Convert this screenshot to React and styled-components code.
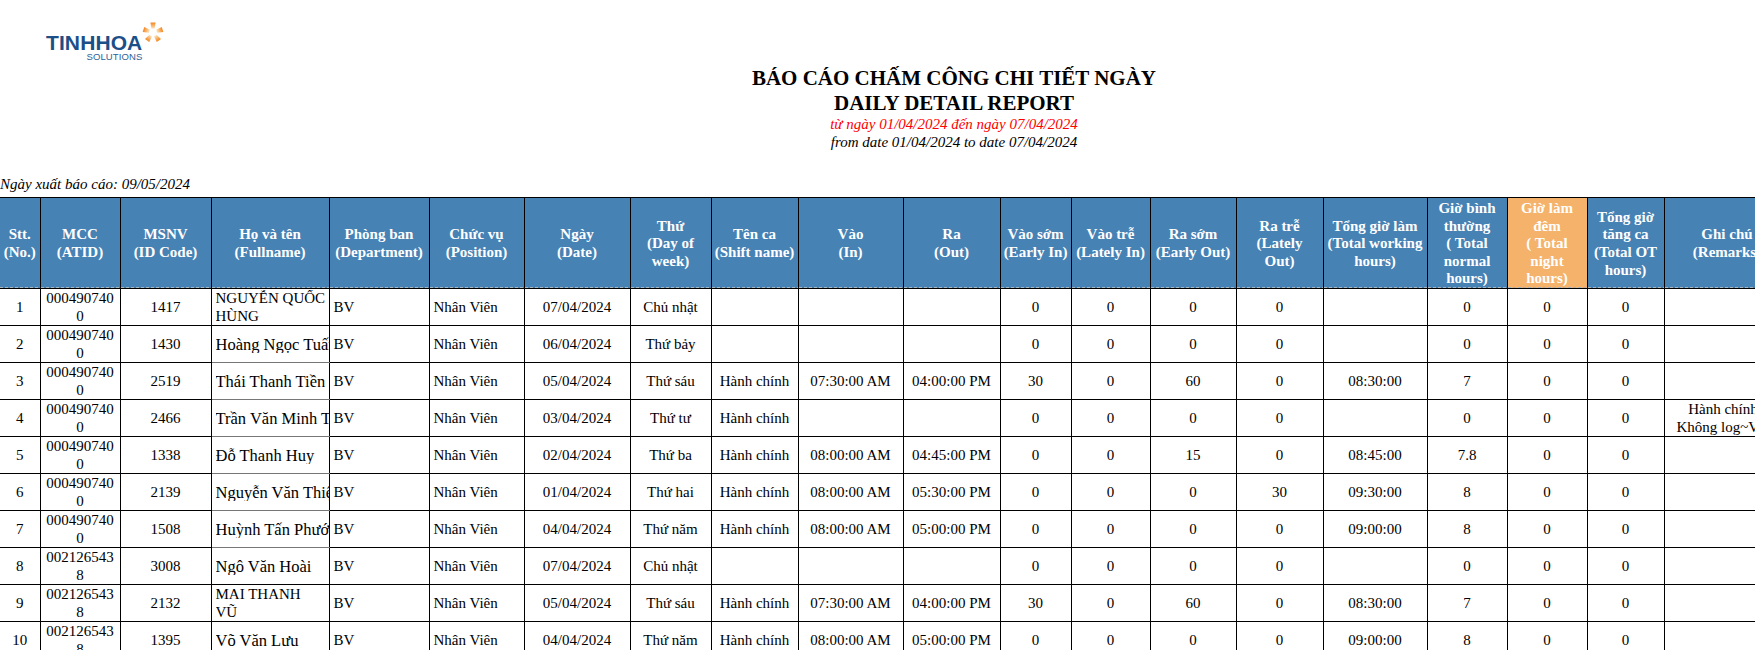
import React from 'react';
import styled, { createGlobalStyle } from 'styled-components';

const GlobalStyle = createGlobalStyle`
  html, body {
    margin: 0;
    height: 650px;
    overflow: hidden;
    background: #fff;
  }
`;

const columnWidths = [40, 80, 91, 118, 100, 95, 106, 81, 87, 105, 97, 71, 79, 86, 87, 104, 80, 80, 77, 126];

const headers = [
  ['Stt.', '(No.)'],
  ['MCC', '(ATID)'],
  ['MSNV', '(ID Code)'],
  ['Họ và tên', '(Fullname)'],
  ['Phòng ban', '(Department)'],
  ['Chức vụ', '(Position)'],
  ['Ngày', '(Date)'],
  ['Thứ', '(Day of week)'],
  ['Tên ca', '(Shift name)'],
  ['Vào', '(In)'],
  ['Ra', '(Out)'],
  ['Vào sớm', '(Early In)'],
  ['Vào trễ', '(Lately In)'],
  ['Ra sớm', '(Early Out)'],
  ['Ra trễ', '(Lately', 'Out)'],
  ['Tổng giờ làm', '(Total working hours)'],
  ['Giờ bình thường', '( Total normal hours)'],
  ['Giờ làm đêm', '( Total night hours)'],
  ['Tổng giờ tăng ca', '(Total OT hours)'],
  ['Ghi chú', '(Remarks)'],
];

const ID_A = '0004907400';
const ID_B = '0021265438';
const REMARK = 'Hành chính~ Không log~Vào;';

const rows = [
  { mcc: ID_A, code: '1417', name: 'NGUYỄN QUỐC HÙNG', date: '07/04/2024', day: 'Chủ nhật', shift: '', timeIn: '', timeOut: '', early: 0, late: 0, out: 0, lateOut: 0, total: '', normal: 0 },
  { mcc: ID_A, code: '1430', name: 'Hoàng Ngọc Tuấn', fixedName: true, softLine: true, date: '06/04/2024', day: 'Thứ bảy', shift: '', timeIn: '', timeOut: '', early: 0, late: 0, out: 0, lateOut: 0, total: '', normal: 0 },
  { mcc: ID_A, code: '2519', name: 'Thái Thanh Tiền', fixedName: true, softLine: true, date: '05/04/2024', day: 'Thứ sáu', shift: 'Hành chính', timeIn: '07:30:00 AM', timeOut: '04:00:00 PM', early: 30, late: 0, out: 60, lateOut: 0, total: '08:30:00', normal: 7 },
  { mcc: ID_A, code: '2466', name: 'Trần Văn Minh Tâm', fixedName: true, softLine: true, date: '03/04/2024', day: 'Thứ tư', shift: 'Hành chính', timeIn: '', timeOut: '', early: 0, late: 0, out: 0, lateOut: 0, total: '', normal: 0, remark: REMARK },
  { mcc: ID_A, code: '1338', name: 'Đỗ Thanh Huy', fixedName: true, softLine: true, date: '02/04/2024', day: 'Thứ ba', shift: 'Hành chính', timeIn: '08:00:00 AM', timeOut: '04:45:00 PM', early: 0, late: 0, out: 15, lateOut: 0, total: '08:45:00', normal: 7.8 },
  { mcc: ID_A, code: '2139', name: 'Nguyễn Văn Thiệu', fixedName: true, softLine: true, date: '01/04/2024', day: 'Thứ hai', shift: 'Hành chính', timeIn: '08:00:00 AM', timeOut: '05:30:00 PM', early: 0, late: 0, out: 0, lateOut: 30, total: '09:30:00', normal: 8 },
  { mcc: ID_A, code: '1508', name: 'Huỳnh Tấn Phước', fixedName: true, softLine: true, date: '04/04/2024', day: 'Thứ năm', shift: 'Hành chính', timeIn: '08:00:00 AM', timeOut: '05:00:00 PM', early: 0, late: 0, out: 0, lateOut: 0, total: '09:00:00', normal: 8 },
  { mcc: ID_B, code: '3008', name: 'Ngô Văn Hoài', fixedName: true, date: '07/04/2024', day: 'Chủ nhật', shift: '', timeIn: '', timeOut: '', early: 0, late: 0, out: 0, lateOut: 0, total: '', normal: 0 },
  { mcc: ID_B, code: '2132', name: 'MAI THANH VŨ', date: '05/04/2024', day: 'Thứ sáu', shift: 'Hành chính', timeIn: '07:30:00 AM', timeOut: '04:00:00 PM', early: 30, late: 0, out: 60, lateOut: 0, total: '08:30:00', normal: 7 },
  { mcc: ID_B, code: '1395', name: 'Võ Văn Lưu', fixedName: true, date: '04/04/2024', day: 'Thứ năm', shift: 'Hành chính', timeIn: '08:00:00 AM', timeOut: '05:00:00 PM', early: 0, late: 0, out: 0, lateOut: 0, total: '09:00:00', normal: 8 },
];

const petals = [0, 72, 144, 216, 288];

const LogoStar = () => (
  <StyledStar viewBox="0 0 22 22" aria-hidden="true">
    <defs>
      <linearGradient id="petal" x1="0" y1="0" x2="0" y2="1">
        <stop offset="0" stopColor="#f4851c" />
        <stop offset="1" stopColor="#fde3bd" />
      </linearGradient>
    </defs>
    {petals.map((angle) => (
      <polygon key={angle} points="8.4,0.5 13.6,0.5 12.6,6.6 9.4,6.6" fill="url(#petal)" transform={`rotate(${angle} 11 10.5)`} />
    ))}
  </StyledStar>
);

export default function App() {
  return (
    <StyledPage>
      <GlobalStyle />
      <StyledLogo>
        <StyledWordmark>
          <StyledBrand>TINHHOA</StyledBrand>
          <StyledBrandSub>SOLUTIONS</StyledBrandSub>
        </StyledWordmark>
        <LogoStar />
      </StyledLogo>

      <StyledHeading>
        <StyledTitle>BÁO CÁO CHẤM CÔNG CHI TIẾT NGÀY</StyledTitle>
        <StyledTitle>DAILY DETAIL REPORT</StyledTitle>
        <StyledRange $red>từ ngày 01/04/2024 đến ngày 07/04/2024</StyledRange>
        <StyledRange>from date 01/04/2024 to date 07/04/2024</StyledRange>
      </StyledHeading>

      <StyledExportDate>Ngày xuất báo cáo: 09/05/2024</StyledExportDate>

      <StyledTable>
        <colgroup>
          {columnWidths.map((width, i) => (
            <col key={i} style={{ width }} />
          ))}
        </colgroup>
        <thead>
          <tr>
            {headers.map((lines, i) => (
              <StyledHeadCell key={i} $night={i === 17}>
                {lines.map((line, j) => (
                  <React.Fragment key={j}>
                    {j > 0 && <br />}
                    {line}
                  </React.Fragment>
                ))}
              </StyledHeadCell>
            ))}
          </tr>
        </thead>
        <tbody>
          {rows.map((row, i) => (
            <tr key={i}>
              <StyledCell>{i + 1}</StyledCell>
              <StyledCell>{row.mcc}</StyledCell>
              <StyledCell>{row.code}</StyledCell>
              <StyledNameCell $fixed={row.fixedName} $soft={row.softLine}>
                <StyledNameClip $fixed={row.fixedName}>{row.name}</StyledNameClip>
              </StyledNameCell>
              <StyledCell $left>BV</StyledCell>
              <StyledCell $left>Nhân Viên</StyledCell>
              <StyledCell>{row.date}</StyledCell>
              <StyledCell>{row.day}</StyledCell>
              <StyledCell>{row.shift}</StyledCell>
              <StyledCell>{row.timeIn}</StyledCell>
              <StyledCell>{row.timeOut}</StyledCell>
              <StyledCell>{row.early}</StyledCell>
              <StyledCell>{row.late}</StyledCell>
              <StyledCell>{row.out}</StyledCell>
              <StyledCell>{row.lateOut}</StyledCell>
              <StyledCell>{row.total}</StyledCell>
              <StyledCell>{row.normal}</StyledCell>
              <StyledCell>0</StyledCell>
              <StyledCell>0</StyledCell>
              <StyledCell>{row.remark}</StyledCell>
            </tr>
          ))}
        </tbody>
      </StyledTable>
    </StyledPage>
  );
}

const StyledPage = styled.div`
  width: 1908px;
  font-family: 'Liberation Serif', 'Times New Roman', serif;
  color: #000;
`;

const StyledLogo = styled.div`
  display: flex;
  align-items: flex-start;
  padding: 23px 0 0 46px;
  height: 36px;
`;

const StyledWordmark = styled.div`
  display: flex;
  flex-direction: column;
  align-items: flex-end;
  margin-top: 10px;
  font-family: 'Liberation Sans', Arial, sans-serif;
`;

const StyledBrand = styled.div`
  font-size: 21px;
  line-height: 19px;
  font-weight: 700;
  letter-spacing: 0.1px;
  color: #1c4f87;
`;

const StyledBrandSub = styled.div`
  font-size: 9.5px;
  line-height: 9px;
  letter-spacing: 0.1px;
  color: #2e6299;
`;

const StyledStar = styled.svg`
  width: 22px;
  height: 22px;
  margin-top: -1px;
  flex: none;
`;

const StyledHeading = styled.div`
  margin-top: 7px;
  text-align: center;
`;

const StyledTitle = styled.div`
  font-size: 21px;
  line-height: 25px;
  font-weight: 700;
`;

const StyledRange = styled.div`
  font-size: 15px;
  line-height: 17.5px;
  font-style: italic;
  color: ${({ $red }) => ($red ? '#ff0000' : '#000')};
`;

const StyledExportDate = styled.div`
  margin-top: 25px;
  font-size: 15px;
  line-height: 17px;
  font-style: italic;
`;

const StyledTable = styled.table`
  margin-top: 4px;
  border-collapse: collapse;
  table-layout: fixed;
  width: 1790px;
  font-size: 15px;
`;

const StyledHeadCell = styled.th`
  height: 88px;
  padding: 2px 1px 0;
  border: 1px solid #000;
  font-weight: 700;
  line-height: 17.6px;
  text-align: center;
  vertical-align: middle;
  overflow: hidden;
  color: #fff;
  background-color: ${({ $night }) => ($night ? '#f4b26b' : '#4682b4')};
  background-image: repeating-linear-gradient(90deg, #a9b4bd 0 3px, transparent 3px 5px);
  background-size: 100% 1px;
  background-position: bottom;
  background-repeat: no-repeat;

  &:first-child {
    border-left: none;
  }
`;

const StyledCell = styled.td`
  height: 35px;
  padding: 1px 4px 0;
  border: 1px solid #000;
  line-height: 17.4px;
  text-align: ${({ $left }) => ($left ? 'left' : 'center')};
  vertical-align: middle;
  overflow: hidden;
  word-break: ${({ $left }) => ($left ? 'normal' : 'break-all')};

  &:first-child {
    border-left: none;
  }

  &:last-child {
    word-break: normal;
  }
`;

const StyledNameCell = styled.td`
  height: 35px;
  padding: 1px ${({ $fixed }) => ($fixed ? '0' : '3px')} 0 4px;
  border: 1px solid #000;
  border-bottom-color: ${({ $soft }) => ($soft ? '#777' : '#000')};
  line-height: 17.4px;
  text-align: left;
  vertical-align: middle;
  overflow: hidden;
`;

const StyledNameClip = styled.div`
  overflow: hidden;
  font-size: ${({ $fixed }) => ($fixed ? '16.5px' : '15px')};
  white-space: ${({ $fixed }) => ($fixed ? 'nowrap' : 'normal')};
`;
